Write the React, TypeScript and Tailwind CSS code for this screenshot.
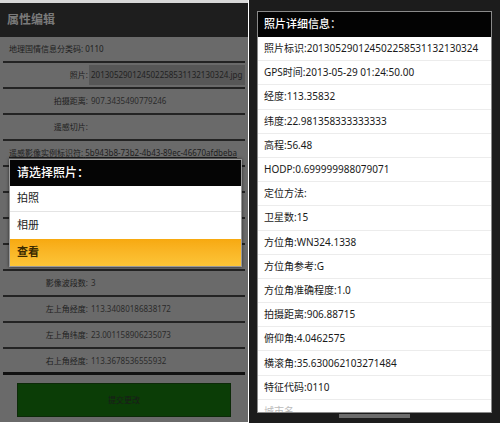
const cjk = { fontFamily: '"Noto Sans", "Noto Sans CJK SC", sans-serif' };

interface FieldRow {
  label: string;
  value?: string;
  boxed?: boolean;
  wide?: boolean;
}

const fieldRows: FieldRow[] = [
  { label: "地理国情信息分类码:", value: "0110", wide: true },
  { label: "照片:", value: "201305290124502258531132130324.jpg", boxed: true },
  { label: "拍摄距离:", value: "907.3435490779246" },
  { label: "遥感切片:" },
  { label: "遥感影像实例标识符:", value: "5b943b8-73b2-4b43-89ec-46670afdbeba", wide: true },
  { label: "" },
  { label: "" },
  { label: "" },
  { label: "" },
  { label: "影像波段数:", value: "3" },
  { label: "左上角经度:", value: "113.34080186838172" },
  { label: "左上角纬度:", value: "23.001158906235073" },
  { label: "右上角经度:", value: "113.3678536555932" },
];

const details = [
  "照片标识:201305290124502258531132130324",
  "GPS时间:2013-05-29 01:24:50.00",
  "经度:113.35832",
  "纬度:22.981358333333333",
  "高程:56.48",
  "HODP:0.699999988079071",
  "定位方法:",
  "卫星数:15",
  "方位角:WN324.1338",
  "方位角参考:G",
  "方位角准确程度:1.0",
  "拍摄距离:906.88715",
  "俯仰角:4.0462575",
  "横滚角:35.630062103271484",
  "特征代码:0110",
  "城市名",
];

function EditPanel() {
  return (
    <div className="relative flex h-[422px] w-[248px] flex-col bg-[#6a6a6a]">
      <div className="flex h-[37px] items-center border-t-[3px] border-[#d8d8d8] bg-[#1e1e1e] px-[7px]">
        <span className="text-[12px] font-bold text-[#7a7a7a]">属性编辑</span>
      </div>

      <div className="flex flex-col px-[3px]">
        {fieldRows.map((row, i) => (
          <div
            key={i}
            className={`flex h-[26px] items-center ${
              i === fieldRows.length - 1
                ? "border-b-[3px] border-[#111]"
                : "border-b-2 border-[#232323]"
            }`}
          >
            {row.wide ? (
              <span
                className={`whitespace-nowrap pl-[6px] text-[8px] text-[#1e1e1e] ${
                  i === 4 ? "underline" : ""
                }`}
              >
                {row.label} {row.value}
              </span>
            ) : (
              <>
                <span className="w-[85px] shrink-0 text-right text-[8px] text-[#1e1e1e]">
                  {row.label}
                </span>
                {row.boxed ? (
                  <span className="ml-[1px] flex h-[20px] flex-1 items-center overflow-hidden whitespace-nowrap bg-[#575757] pl-[2px] text-[8px] text-[#222]">
                    {row.value}
                  </span>
                ) : (
                  <span className="pl-[3px] text-[8px] text-[#2a2a2a]">{row.value}</span>
                )}
              </>
            )}
          </div>
        ))}
      </div>

      <div className="flex flex-1 items-center px-[17px] pb-[3px] pt-[6px]">
        <div className="flex h-[34px] w-full items-center justify-center border border-[#0c2a08] bg-[#0b3d06]">
          <span className="text-[8px] text-[#1a1a1a]">提交更改</span>
        </div>
      </div>

      <div className="absolute left-[9px] top-[159px] w-[233px] border border-[#9a9a9a] shadow-[0_0_3px_rgba(0,0,0,0.6)]">
        <div className="flex h-[26px] items-center bg-[#050505] px-[7px]">
          <span className="text-[12px] font-medium text-white">请选择照片：</span>
        </div>
        <div className="flex h-[26px] items-center border-b border-[#e4e4e4] bg-white px-[7px]">
          <span className="text-[11px] text-[#222]">拍照</span>
        </div>
        <div className="flex h-[27px] items-center bg-white px-[7px]">
          <span className="text-[11px] text-[#222]">相册</span>
        </div>
        <div className="flex h-[27px] items-center bg-gradient-to-b from-[#f7a90f] to-[#fcc537] px-[7px]">
          <span className="text-[11px] font-bold text-[#3a2a00]">查看</span>
        </div>
      </div>
    </div>
  );
}

function DetailPanel() {
  return (
    <div className="flex h-[423px] flex-1 flex-col items-center bg-[#1c1c1c] pt-[11px]">
      <div className="flex h-[402px] w-[235px] flex-col overflow-hidden border border-[#8a8a8a] bg-white">
        <div className="flex h-[25px] shrink-0 items-center bg-[#030303] px-[6px]">
          <span className="text-[11px] font-medium text-white">照片详细信息：</span>
        </div>
        {details.map((line, i) => (
          <div
            key={i}
            className="flex h-[24.2px] shrink-0 items-center border-b border-[#ececec] px-[6px]"
          >
            <span
              className={`whitespace-nowrap text-[10px] ${
                i === details.length - 1 ? "text-[#bbb]" : "text-[#1a1a1a]"
              }`}
            >
              {line}
            </span>
          </div>
        ))}
      </div>
      <div className="mt-[1px] h-[4px] w-[71px] bg-[#6b6b6b]" />
    </div>
  );
}

export default function App() {
  return (
    <div className="h-[426px] w-[500px] bg-white" style={cjk}>
      <div className="flex gap-px">
        <EditPanel />
        <DetailPanel />
      </div>
    </div>
  );
}
